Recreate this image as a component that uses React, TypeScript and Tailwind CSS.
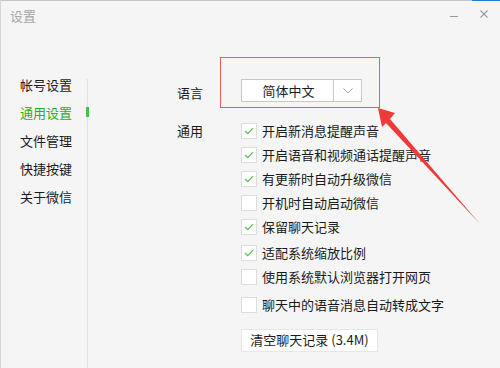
import React from "react";

const options = [
  { label: "开启新消息提醒声音", checked: true, gap: "mt-0" },
  { label: "开启语音和视频通话提醒声音", checked: true, gap: "mt-2" },
  { label: "有更新时自动升级微信", checked: true, gap: "mt-2" },
  { label: "开机时自动启动微信", checked: false, gap: "mt-2" },
  { label: "保留聊天记录", checked: true, gap: "mt-2" },
  { label: "适配系统缩放比例", checked: true, gap: "mt-[10px]" },
  { label: "使用系统默认浏览器打开网页", checked: false, gap: "mt-2" },
  { label: "聊天中的语音消息自动转成文字", checked: false, gap: "mt-3" },
];

const navItems = ["帐号设置", "通用设置", "文件管理", "快捷按键", "关于微信"];

const CheckBox: React.FC<{ checked: boolean }> = ({ checked }) => (
  <div className="w-4 h-4 shrink-0 bg-white border border-[#dcdcdc] flex items-center justify-center">
    {checked && (
      <svg width="10" height="8" viewBox="0 0 10 8">
        <path d="M1 4 L3.8 6.6 L9 1.2" fill="none" stroke="#4fc04f" strokeWidth="1.2" />
      </svg>
    )}
  </div>
);

export default function App() {
  return (
    <div
      className="relative w-[500px] h-[368px] overflow-hidden bg-[#f5f5f5] text-[13px] text-[#1a1a1a] border-l border-[#d6d6d6]"
      style={{ fontFamily: '"Noto Sans CJK SC", "Noto Sans", sans-serif' }}
    >
      {/* top edge */}
      <div className="flex h-px">
        <div className="flex-1 bg-[#c6c6c6]" />
        <div className="w-[28px] bg-[#1e7ad8]" />
      </div>

      {/* title bar */}
      <div className="h-[29px] flex items-center justify-between pl-[9px] pr-[12px]">
        <span className="text-[#a6a6a6] leading-none -mt-[1px]">设置</span>
        <div className="flex items-center gap-[22px] text-[#9a9a9a]">
          <div className="w-[8px] h-px bg-[#9a9a9a] mt-[1px]" />
          <svg width="8" height="8" viewBox="0 0 8 8" className="-mt-[4px]">
            <path d="M0.5 0.5 L7.5 7.5 M7.5 0.5 L0.5 7.5" stroke="#9a9a9a" strokeWidth="1.1" />
          </svg>
        </div>
      </div>

      <div className="flex h-[338px]">
        {/* sidebar */}
        <div className="w-[86px] pt-[41px] pl-[19px]">
          {navItems.map((n, i) => (
            <div
              key={n}
              className={`h-[28px] flex items-center ${i === 1 ? "text-[#2aae2a]" : "text-[#1a1a1a]"}`}
            >
              {n}
            </div>
          ))}
        </div>

        {/* divider */}
        <div className="relative w-px mt-[49px] bg-[#e1e1e1]">
          <div className="absolute left-[-1px] top-[28px] w-[3px] h-[10px] bg-[#3cc83c]" />
        </div>

        {/* content */}
        <div className="flex-1 pl-[89px] pt-[49px]">
          <div className="flex items-center">
            <span className="w-[64px] mt-[4px]">语言</span>
            <div className="flex h-[23px] w-[121px] bg-white border border-[#c8c8c8]">
              <div className="flex-1 flex items-center justify-center pl-[2px]">简体中文</div>
              <div className="w-[28px] border-l border-[#c8c8c8] flex items-center justify-center">
                <svg width="10" height="6" viewBox="0 0 10 6">
                  <path d="M0.5 0.5 L5 5 L9.5 0.5" fill="none" stroke="#a0a0a0" strokeWidth="1" />
                </svg>
              </div>
            </div>
          </div>

          <div className="flex mt-[20px]">
            <span className="w-[64px] leading-[16px]">通用</span>
            <div className="flex flex-col">
              {options.map((o) => (
                <div key={o.label} className={`flex items-center gap-[5px] ${o.gap}`}>
                  <CheckBox checked={o.checked} />
                  <span className="leading-[16px]">{o.label}</span>
                </div>
              ))}
              <button className="mt-4 w-[137px] h-[23px] bg-white border border-[#e6e6e6] flex items-center justify-center text-[13px] text-[#1a1a1a]">
                清空聊天记录 (3.4M)
              </button>
            </div>
          </div>
        </div>
      </div>

      {/* annotation: red box */}
      <div className="absolute left-[219px] top-[57px] w-[160px] h-[51px] border-[1.5px] border-[#ec5a5a]" />

      {/* annotation: red arrow */}
      <svg className="absolute left-0 top-0 pointer-events-none" width="500" height="368" viewBox="0 0 500 368">
        <polygon
          points="377,108 394,113 389,119 479,224 385,123 381,127"
          fill="#f03a3a"
        />
      </svg>
    </div>
  );
}
